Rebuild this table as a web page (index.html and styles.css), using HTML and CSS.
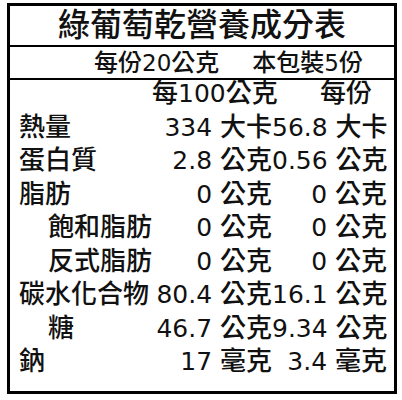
FILE: index.html
```html
<!DOCTYPE html>
<html lang="zh-Hant">
<head>
<meta charset="utf-8">
<title>綠葡萄乾營養成分表</title>
<link rel="stylesheet" href="styles.css">
</head>
<body>
<div class="label">
  <div class="title">綠葡萄乾營養成分表</div>
  <div class="serving"><span>每份<span class="n">20</span>公克</span><span>本包裝<span class="n">5</span>份</span></div>
  <div class="table">
    <div class="row head"><span class="name"></span><span class="v1">每<span class="n">100</span>公克</span><span class="v2 per">每份</span></div>
    <div class="row"><span class="name">熱量</span><span class="v1"><span class="n">334 </span>大卡</span><span class="v2"><span class="n">56.8 </span>大卡</span></div>
    <div class="row"><span class="name">蛋白質</span><span class="v1"><span class="n">2.8 </span>公克</span><span class="v2"><span class="n">0.56 </span>公克</span></div>
    <div class="row"><span class="name">脂肪</span><span class="v1"><span class="n">0 </span>公克</span><span class="v2"><span class="n">0 </span>公克</span></div>
    <div class="row"><span class="name sub">飽和脂肪</span><span class="v1"><span class="n">0 </span>公克</span><span class="v2"><span class="n">0 </span>公克</span></div>
    <div class="row"><span class="name sub">反式脂肪</span><span class="v1"><span class="n">0 </span>公克</span><span class="v2"><span class="n">0 </span>公克</span></div>
    <div class="row"><span class="name">碳水化合物</span><span class="v1"><span class="n">80.4 </span>公克</span><span class="v2"><span class="n">16.1 </span>公克</span></div>
    <div class="row"><span class="name sub">糖</span><span class="v1"><span class="n">46.7 </span>公克</span><span class="v2"><span class="n">9.34 </span>公克</span></div>
    <div class="row"><span class="name">鈉</span><span class="v1"><span class="n">17 </span>毫克</span><span class="v2"><span class="n">3.4 </span>毫克</span></div>
  </div>
</div>
</body>
</html>
```
FILE: styles.css
```css
html, body {
  margin: 0;
  padding: 0;
  background: #fff;
}
body {
  font-family: "DejaVu Sans", "Noto Sans CJK TC", sans-serif;
  font-weight: 500;
  color: #111;
}
.label {
  box-sizing: border-box;
  width: 390px;
  height: 391px;
  margin: 3px 0 0 7px;
  border: 3px solid #000;
  display: flex;
  flex-direction: column;
}
.title {
  height: 39px;
  border-bottom: 2px solid #000;
  font-size: 32px;
  line-height: 39px;
  text-align: center;
  white-space: nowrap;
}
.serving {
  height: 31px;
  border-bottom: 2px solid #000;
  font-size: 24px;
  line-height: 33px;
  display: flex;
  gap: 33px;
  padding-left: 84px;
  white-space: nowrap;
}
.n {
  font-size: 0.96em;
}
.table {
  flex: 1;
  padding: 0 7px 0 9px;
  font-size: 26px;
}
.row {
  display: grid;
  grid-template-columns: 1fr 120px 115px;
  height: 33.5px;
  line-height: 26px;
  white-space: nowrap;
}
.v1, .v2 {
  text-align: right;
}
.per {
  padding-right: 15px;
}
.sub {
  padding-left: 29px;
}
```
